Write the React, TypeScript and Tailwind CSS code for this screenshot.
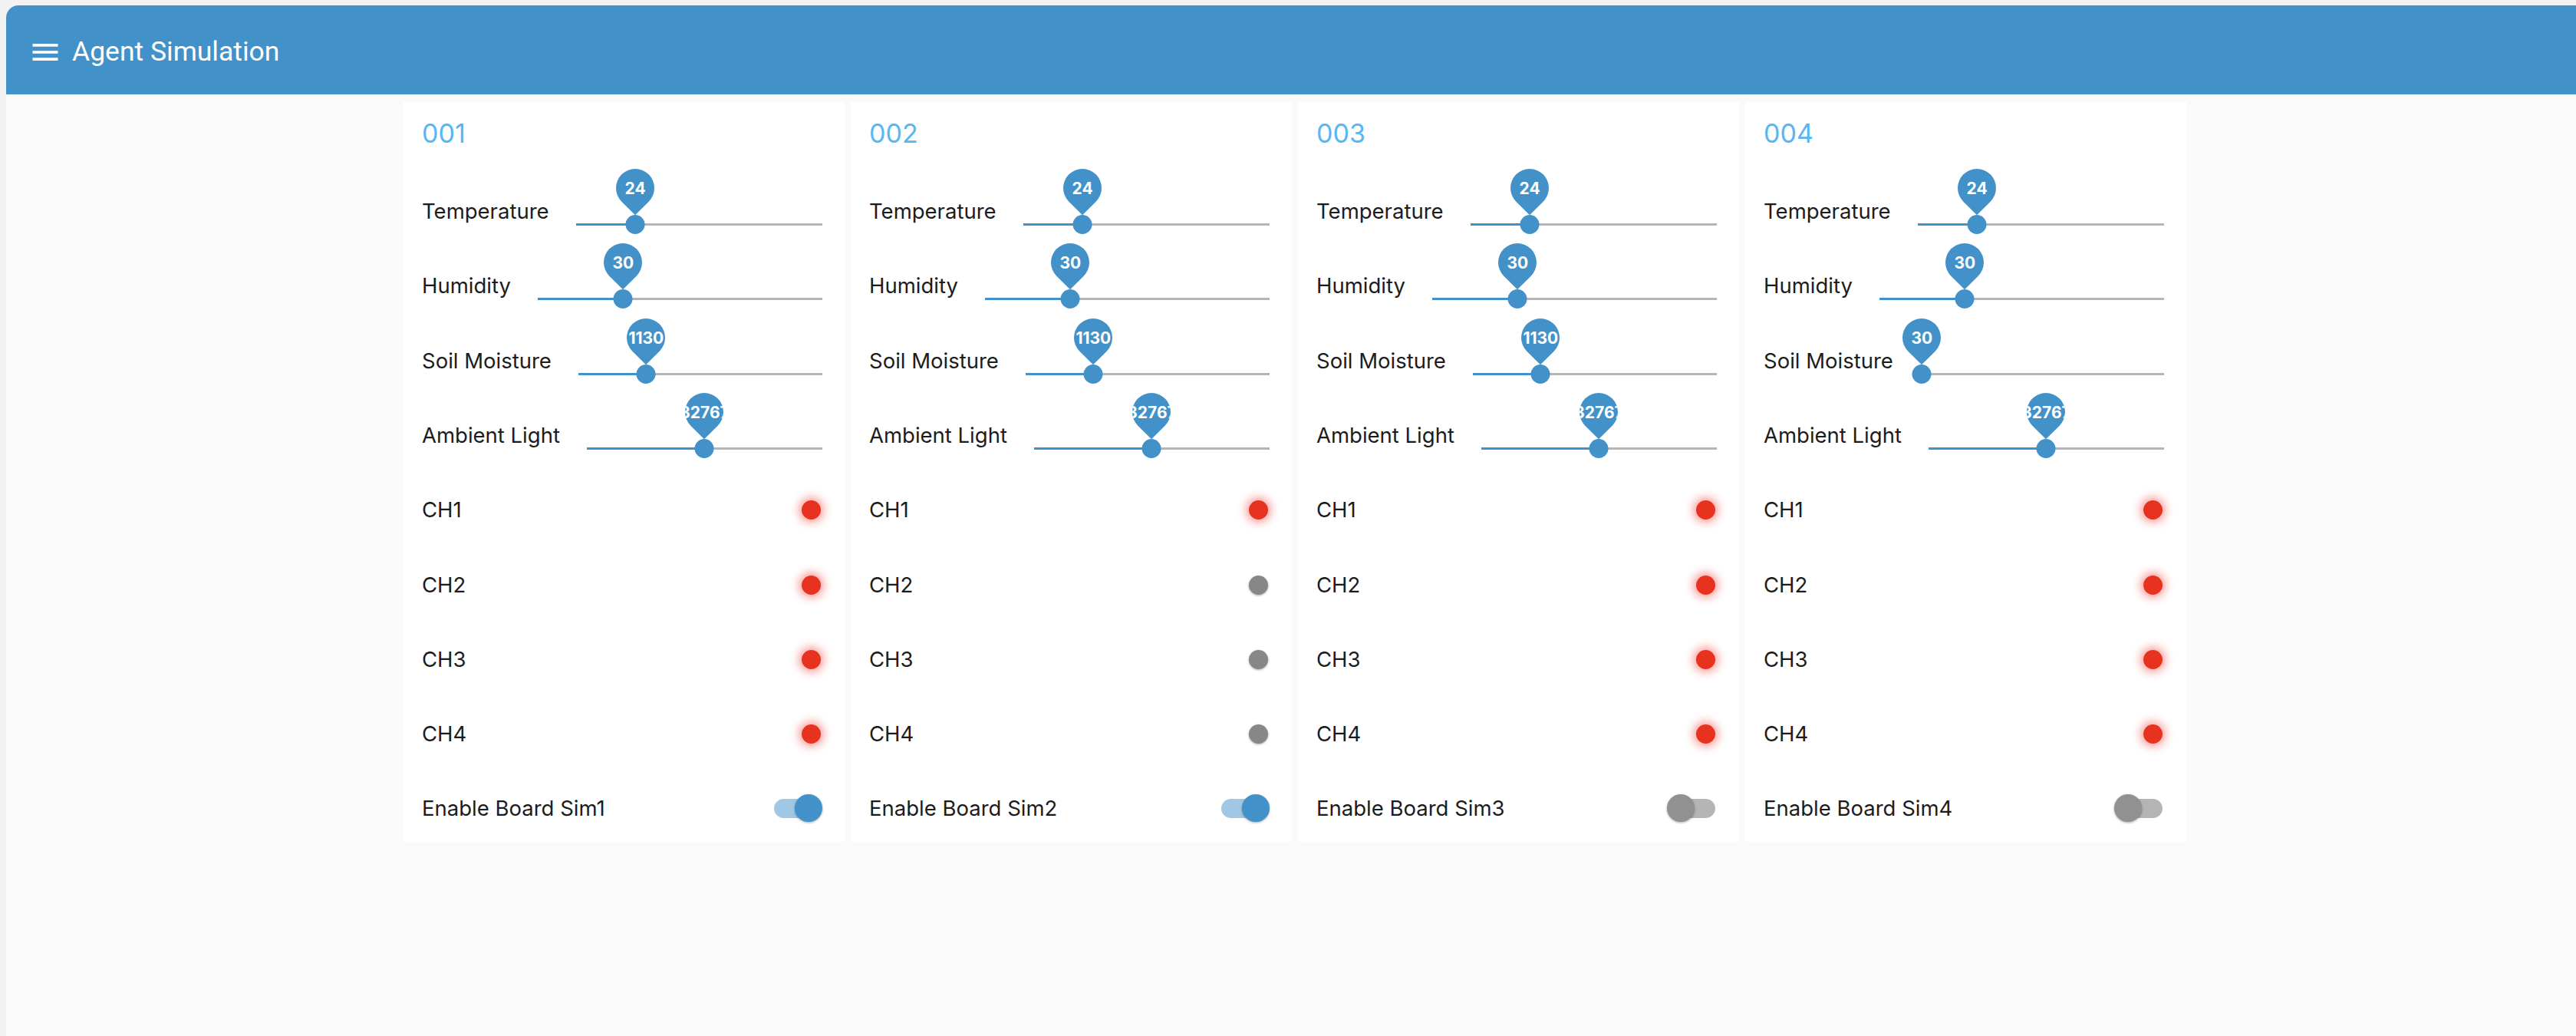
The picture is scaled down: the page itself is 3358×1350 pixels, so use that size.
import { Fragment } from 'react'

type Board = {
  id: string
  temperature: number
  humidity: number
  soil: number
  light: number
  channels: boolean[]
  enabled: boolean
}

const boards: Board[] = [
  { id: '001', temperature: 24, humidity: 30, soil: 1130, light: 32767, channels: [true, true, true, true], enabled: true },
  { id: '002', temperature: 24, humidity: 30, soil: 1130, light: 32767, channels: [true, false, false, false], enabled: true },
  { id: '003', temperature: 24, humidity: 30, soil: 1130, light: 32767, channels: [true, true, true, true], enabled: false },
  { id: '004', temperature: 24, humidity: 30, soil: 30, light: 32767, channels: [true, true, true, true], enabled: false },
]

function MenuIcon() {
  return (
    <svg viewBox="0 0 24 24" className="h-[44px] w-[44px] fill-white">
      <path d="M3 18h18v-2H3v2zm0-5h18v-2H3v2zm0-7v2h18V6H3z" />
    </svg>
  )
}

function ValueSlider({ value, max }: { value: number; max: number }) {
  const pct = (value / max) * 100
  return (
    <div className="relative h-[25px] flex-1">
      <div className="absolute top-[11px] right-0 left-0 h-[3px] bg-[#b5b5b5]" />
      <div className="absolute top-[11px] left-0 h-[3px] bg-[#4292c9]" style={{ width: `${pct}%` }} />
      <div
        className="absolute top-0 h-[25px] w-[25px] -translate-x-1/2 rounded-full bg-[#4292c9]"
        style={{ left: `${pct}%` }}
      />
      <div className="absolute top-[-60px] h-[50px] w-[50px] -translate-x-1/2" style={{ left: `${pct}%` }}>
        <div className="flex h-full w-full rotate-[-45deg] items-center justify-center overflow-hidden rounded-[50%_50%_50%_0] bg-[#4292c9]">
          <span className="shrink-0 rotate-45 whitespace-nowrap text-[21px] leading-none font-bold text-white">
            {value}
          </span>
        </div>
      </div>
    </div>
  )
}

function Led({ on }: { on: boolean }) {
  return (
    <div
      className={
        on
          ? 'mr-[2px] h-[25px] w-[25px] rounded-full bg-[#e7321f] shadow-[0_0_12px_4px_rgba(240,40,30,0.45)]'
          : 'mr-[2px] h-[25px] w-[25px] rounded-full bg-[#878787] shadow-[0_1px_3px_rgba(0,0,0,0.35)]'
      }
    />
  )
}

function Toggle({ on }: { on: boolean }) {
  return (
    <div className="relative mr-[2px] h-[36px] w-[61px]">
      <div
        className={`absolute top-[5.5px] right-0 left-0 h-[25px] rounded-full ${on ? 'bg-[#a0c8e4]' : 'bg-[#b5b5b5]'}`}
      />
      <div
        className={`absolute top-0 h-[36px] w-[36px] rounded-full shadow-[0_1px_3px_rgba(0,0,0,0.35)] ${
          on ? 'right-[-2px] bg-[#4292c9]' : 'left-[-2px] bg-[#919191]'
        }`}
      />
    </div>
  )
}

function SliderRow({ label, value, max }: { label: string; value: number; max: number }) {
  return (
    <div className="flex h-[97.3px] items-center">
      <span className="text-[27.5px] text-[#1c1c1c]">{label}</span>
      <div className="mt-[34px] ml-[35px] flex flex-1">
        <ValueSlider value={value} max={max} />
      </div>
    </div>
  )
}

function BoardCard({ board, index }: { board: Board; index: number }) {
  return (
    <div className="w-[575px] bg-white pr-[29px] pl-6">
      <div className="h-[94px] pt-[22px]">
        <h2 className="text-[34px] leading-[38px] font-normal text-[#58b7f2]">{board.id}</h2>
      </div>
      <SliderRow label="Temperature" value={board.temperature} max={100} />
      <SliderRow label="Humidity" value={board.humidity} max={100} />
      <SliderRow label="Soil Moisture" value={board.soil} max={4095} />
      <SliderRow label="Ambient Light" value={board.light} max={65535} />
      {board.channels.map((on, i) => (
        <Fragment key={i}>
          <div className="flex h-[97.3px] items-center justify-between">
            <span className="text-[27.5px] text-[#1c1c1c]">CH{i + 1}</span>
            <Led on={on} />
          </div>
        </Fragment>
      ))}
      <div className="flex h-[92px] items-start justify-between pt-[30px]">
        <span className="text-[27.5px] leading-[36px] text-[#1c1c1c]">Enable Board Sim{index + 1}</span>
        <Toggle on={board.enabled} />
      </div>
    </div>
  )
}

export default function App() {
  return (
    <div className="min-h-screen bg-[#f2f2f2] pt-[7px] pl-[8px] font-['Inter','Liberation_Sans',sans-serif]">
      <div className="min-h-[1343px] overflow-hidden rounded-tl-[16px] bg-[#fafafa]">
        <header className="flex h-[116px] items-center bg-[#4292c9] pt-[5px] pl-[29px]">
          <MenuIcon />
          <h1 className="ml-[13px] font-['Roboto','Liberation_Sans',sans-serif] text-[35.5px] font-normal text-white">
            Agent Simulation
          </h1>
        </header>
        <main className="flex justify-center gap-2 pt-[10px] pl-[10px]">
          {boards.map((b, i) => (
            <BoardCard key={b.id} board={b} index={i} />
          ))}
        </main>
      </div>
    </div>
  )
}
